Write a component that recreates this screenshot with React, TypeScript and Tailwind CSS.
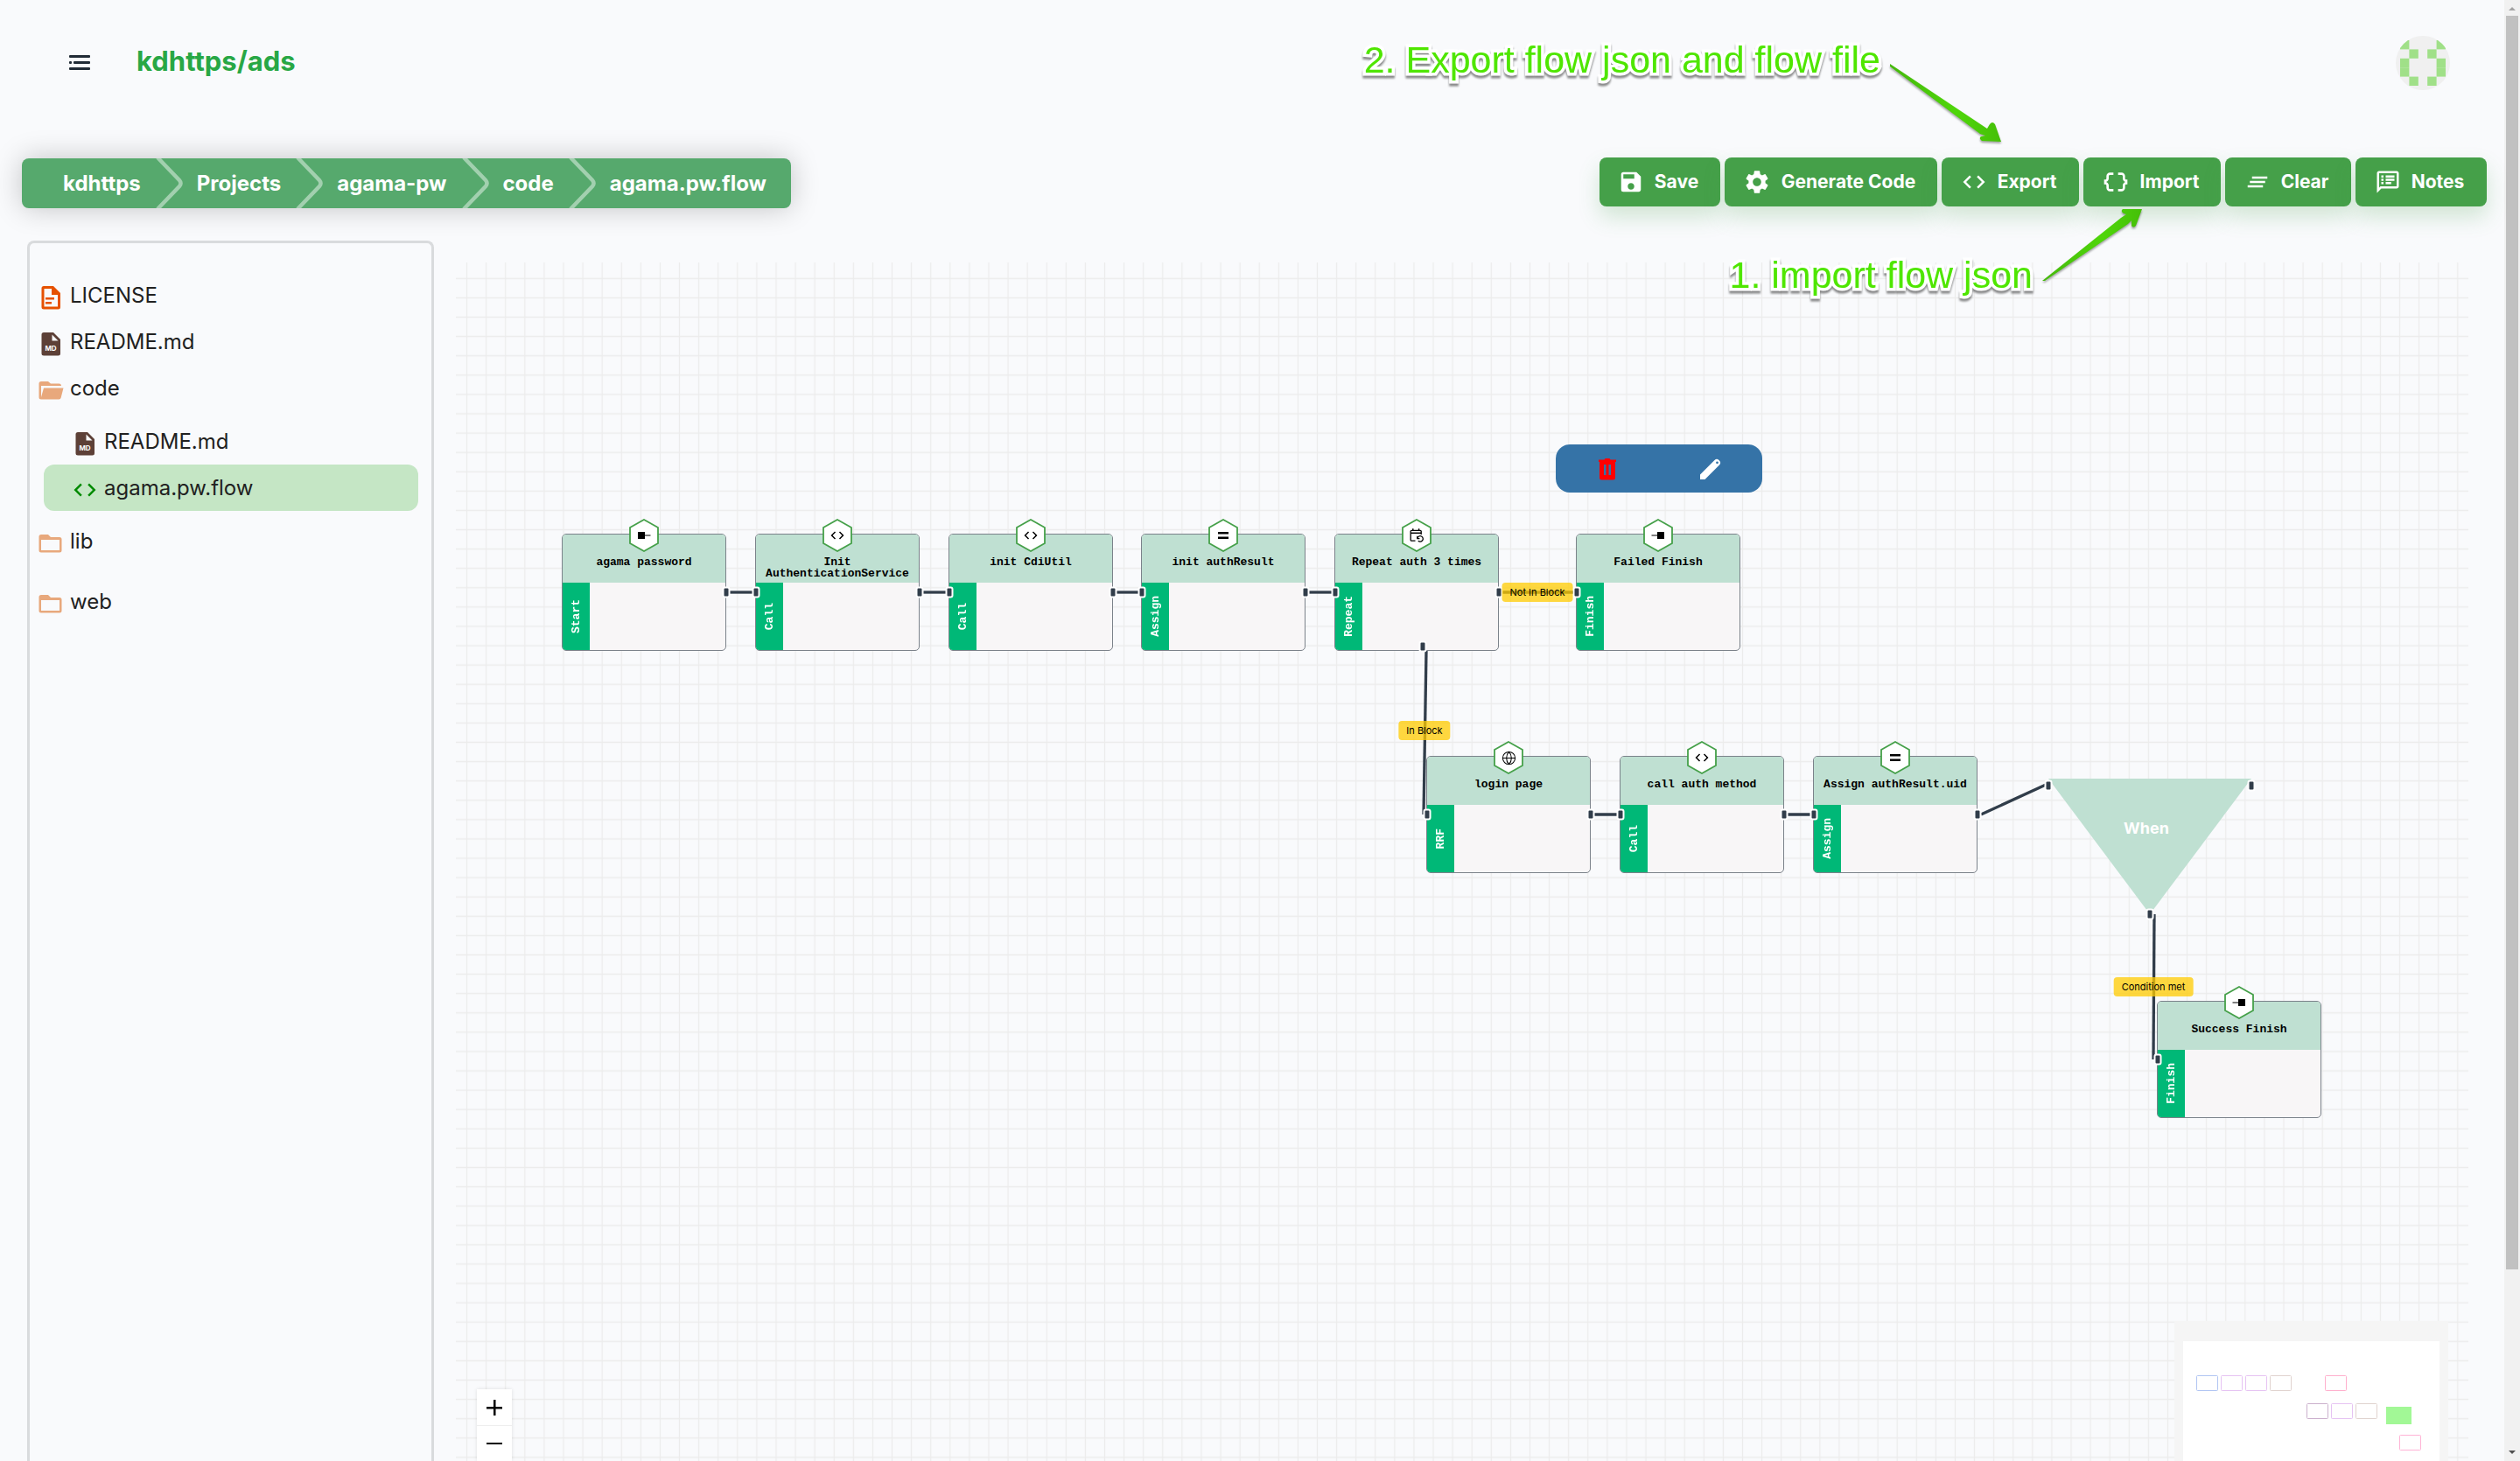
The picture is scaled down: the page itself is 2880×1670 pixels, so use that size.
import React from "react";
import { Globe } from "lucide-react";
import {
  MdSave,
  MdSettings,
  MdCode,
  MdDataObject,
  MdClearAll,
  MdOutlineSpeakerNotes,
} from "react-icons/md";

const INK = "#313d4a";
const SANS = "font-['Inter',sans-serif]";

/* ---------- icons ---------- */

function MenuIcon() {
  return (
    <svg width="24" height="18" viewBox="0 0 24 18" fill="#212b36">
      <rect x="0" y="0" width="24" height="3" rx="1" />
      <rect x="0" y="7" width="3" height="3" rx="1" />
      <rect x="5" y="7" width="19" height="3" rx="1" />
      <rect x="0" y="14" width="24" height="3" rx="1" />
    </svg>
  );
}

function Avatar() {
  const cells = [
    [0, 0], [4, 0], [1, 1], [3, 1], [0, 2], [4, 2], [0, 3], [4, 3], [1, 4], [3, 4],
  ];
  return (
    <svg width="64" height="62" viewBox="0 0 62 62" aria-hidden="true">
      <defs>
        <clipPath id="avatar-clip">
          <circle cx="31" cy="31" r="31" />
        </clipPath>
      </defs>
      <g clipPath="url(#avatar-clip)">
        <rect width="62" height="62" fill="#f0f0f0" />
        {cells.map(([c, r]) => (
          <rect key={`${c}-${r}`} x={5 + c * 10.4} y={5 + r * 10.4} width="10.4" height="10.4" fill="#a0e088" />
        ))}
      </g>
    </svg>
  );
}

function DocIcon() {
  return (
    <svg width="32" height="32" viewBox="0 0 32 32">
      <path
        d="M8 3h11l8 8v16a2.500 2.500 0 0 1-2.500 2.500H8A2.500 2.500 0 0 1 5.500 27V5.500A2.500 2.500 0 0 1 8 3zm.500 3v20.500h15.500V13h-7V6zM10 16h10v2.500H10zm0 5h7v2.500h-7z"
        fill="#e65100"
      />
    </svg>
  );
}

function MdFileIcon() {
  return (
    <svg width="32" height="32" viewBox="0 0 32 32">
      <path
        d="M8 3h11l8 8v16a2.500 2.500 0 0 1-2.500 2.500H8A2.500 2.500 0 0 1 5.500 27V5.500A2.500 2.500 0 0 1 8 3z"
        fill="#5d4037"
      />
      <path d="M17.500 5.500v7h7z" fill="#f9fafc" />
      <text x="16" y="24" fontSize="8" fontWeight="700" fontFamily="Inter, sans-serif" textAnchor="middle" fill="#fff">
        MD
      </text>
    </svg>
  );
}

function FolderIcon() {
  return (
    <svg width="32" height="32" viewBox="0 0 32 32">
      <path
        d="M5 6h8l3 3h10a2.500 2.500 0 0 1 2.500 2.500V24a2.500 2.500 0 0 1-2.500 2.500H5A2.500 2.500 0 0 1 2.500 24V8.500A2.500 2.500 0 0 1 5 6zm0 6v12h21V12z"
        fill="#e8a87c"
      />
    </svg>
  );
}

function FolderOpenIcon() {
  return (
    <svg width="32" height="32" viewBox="0 0 32 32">
      <path
        d="M5 6h8l3 2.500h9.500a2.500 2.500 0 0 1 2.500 2.500H5v13l3-10.500h22.500l-2.800 11a2.500 2.500 0 0 1-2.400 2H5A2.500 2.500 0 0 1 2.500 24V8.500A2.500 2.500 0 0 1 5 6z"
        fill="#e8a87c"
      />
    </svg>
  );
}

function TrashIcon() {
  return (
    <svg width="26" height="26" viewBox="0 0 26 26">
      <path
        d="M3 2.500h6.500L10.500 1h5l1 1.500H23V5h-1v18a2.500 2.500 0 0 1-2.500 2.500h-13A2.500 2.500 0 0 1 4 23V5H3zM9 8v12h2.500V8zm5.500 0v12H17V8z"
        fill="#ff0000"
        fillRule="evenodd"
      />
    </svg>
  );
}

function PencilIcon() {
  return (
    <svg width="26" height="26" viewBox="0 0 26 26">
      <path
        d="M1 19.500 17.500 3a3.600 3.600 0 0 1 5 0l.5.500a3.600 3.600 0 0 1 0 5L6.500 25H1zM20.500 4.400a1.400 1.400 0 1 0 0 2.800 1.400 1.400 0 0 0 0-2.800z"
        fill="#fff"
        fillRule="evenodd"
      />
    </svg>
  );
}

function StartGlyph() {
  return (
    <svg width="16" height="16" viewBox="0 0 16 16">
      <path d="M1 4h8v3.500h6.500v1H9V12H1z" />
    </svg>
  );
}

function FinishGlyph() {
  return (
    <svg width="16" height="16" viewBox="0 0 16 16">
      <path d="M15 4H7v3.500H.5v1H7V12h8z" />
    </svg>
  );
}

function EqualsGlyph() {
  return (
    <svg width="16" height="16" viewBox="0 0 16 16">
      <path d="M2 4h12v2.500H2zM2 9.500h12V12H2z" />
    </svg>
  );
}

function RepeatGlyph() {
  return (
    <svg width="18" height="18" viewBox="0 0 18 18" fill="none" stroke="#000" strokeWidth="1.300">
      <path d="M7.500 15.200H3.200a1 1 0 0 1-1-1V4.300a1 1 0 0 1 1-1h10a1 1 0 0 1 1 1V8" />
      <path d="M2.200 6.300h12" strokeWidth="1.500" />
      <path d="M4.800 1.300v2.500M11.600 1.300v2.500" strokeWidth="1.500" />
      <path d="M10 12.200a3.200 3.200 0 1 1 .8 2.900" />
      <path d="M9.700 9.800v2.800h2.700" strokeWidth="1.100" />
    </svg>
  );
}

/* ---------- top area ---------- */

function Chevron() {
  return (
    <svg width="32" height="57" viewBox="0 0 32 57" className="shrink-0" fill="none">
      <path d="M3 -1 L28 25 Q31 28.500 28 32 L3 58" stroke="#fff" strokeOpacity="0.45" strokeWidth="4.500" />
    </svg>
  );
}

function Breadcrumbs() {
  const crumbs = ["kdhttps", "Projects", "agama-pw", "code", "agama.pw.flow"];
  return (
    <nav
      aria-label="Breadcrumb"
      className="mt-px flex h-[57px] items-center overflow-visible rounded-lg bg-[#56a96d] pr-7 pl-[47px] text-2xl font-bold text-white shadow-[0_0_32px_rgba(0,0,0,0.22)]"
    >
      {crumbs.map((c, i) => (
        <React.Fragment key={c}>
          {i > 0 && (
            <span className="mx-4">
              <Chevron />
            </span>
          )}
          <a href="#" className="whitespace-nowrap">{c}</a>
        </React.Fragment>
      ))}
    </nav>
  );
}

function Actions() {
  const items = [
    { label: "Save", icon: <MdSave size={30} />, w: "w-[138px]" },
    { label: "Generate Code", icon: <MdSettings size={32} />, w: "w-[243px]" },
    { label: "Export", icon: <MdCode size={30} />, w: "w-[157px]" },
    { label: "Import", icon: <MdDataObject size={32} />, w: "w-[157px]" },
    { label: "Clear", icon: <MdClearAll size={30} />, w: "w-[144px]" },
    { label: "Notes", icon: <MdOutlineSpeakerNotes size={30} />, w: "w-[150px]" },
  ];
  return (
    <div className="flex gap-[5px]">
      {items.map((it) => (
        <button
          key={it.label}
          type="button"
          className={`${it.w} flex h-14 items-center justify-center gap-3 rounded-lg bg-[#45a049] pr-1 text-[21px] font-bold whitespace-nowrap text-white shadow-[0_12px_24px_rgba(69,160,73,0.22)]`}
        >
          {it.icon}
          {it.label}
        </button>
      ))}
    </div>
  );
}

/* ---------- file tree ---------- */

function TreeRow({ icon, label, nested, selected }: { icon: React.ReactNode; label: string; nested?: boolean; selected?: boolean }) {
  return (
    <button
      type="button"
      className={`flex h-[53px] items-center gap-1.5 text-left text-2xl text-[#212121] ${
        nested ? "mr-[15px] ml-4 pl-[31px]" : "pl-2"
      } ${selected ? "rounded-xl bg-[#c5e6c5]" : ""}`}
    >
      <span className="flex w-8 justify-center pt-1">{icon}</span>
      <span>{label}</span>
    </button>
  );
}

function Sidebar() {
  return (
    <aside className="mt-[37px] ml-[31px] flex w-[465px] shrink-0 flex-col rounded-t-lg border-[3px] border-b-0 border-[#d9dbdd] pt-[33px]">
      <TreeRow icon={<DocIcon />} label="LICENSE" />
      <TreeRow icon={<MdFileIcon />} label="README.md" />
      <TreeRow icon={<FolderOpenIcon />} label="code" />
      <div className="my-2 flex flex-col">
        <TreeRow nested icon={<MdFileIcon />} label="README.md" />
        <TreeRow nested selected icon={<MdCode size={30} color="#008a00" />} label="agama.pw.flow" />
      </div>
      <div className="flex flex-col gap-4">
        <TreeRow icon={<FolderIcon />} label="lib" />
        <TreeRow icon={<FolderIcon />} label="web" />
      </div>
    </aside>
  );
}

/* ---------- flow canvas ---------- */

type NodeData = { x: number; y: number; title: string; kind: string; icon: React.ReactNode; hasIn?: boolean; hasOut?: boolean };

const NODES: NodeData[] = [
  { x: 121, y: 310, title: "agama password", kind: "Start", icon: <StartGlyph />, hasOut: true },
  { x: 342, y: 310, title: "Init AuthenticationService", kind: "Call", icon: <MdCode size={18} />, hasIn: true, hasOut: true },
  { x: 563, y: 310, title: "init CdiUtil", kind: "Call", icon: <MdCode size={18} />, hasIn: true, hasOut: true },
  { x: 783, y: 310, title: "init authResult", kind: "Assign", icon: <EqualsGlyph />, hasIn: true, hasOut: true },
  { x: 1004, y: 310, title: "Repeat auth 3 times", kind: "Repeat", icon: <RepeatGlyph />, hasIn: true, hasOut: true },
  { x: 1280, y: 310, title: "Failed Finish", kind: "Finish", icon: <FinishGlyph />, hasIn: true },
  { x: 1109, y: 564, title: "login page", kind: "RRF", icon: <Globe size={17} strokeWidth={1.5} />, hasIn: true, hasOut: true },
  { x: 1330, y: 564, title: "call auth method", kind: "Call", icon: <MdCode size={18} />, hasIn: true, hasOut: true },
  { x: 1551, y: 564, title: "Assign authResult.uid", kind: "Assign", icon: <EqualsGlyph />, hasIn: true, hasOut: true },
  { x: 1944, y: 844, title: "Success Finish", kind: "Finish", icon: <FinishGlyph />, hasIn: true },
];

function Handle({ x, y }: { x: number; y: number }) {
  return (
    <span
      className="absolute h-[13px] w-[9px] -translate-x-1/2 -translate-y-1/2 rounded-[3px] border-2 border-white bg-[#313d4a]"
      style={{ left: x, top: y }}
    />
  );
}

function FlowNode({ x, y, title, kind, icon }: NodeData) {
  return (
    <div className="absolute h-[134px] w-[188px] font-['Liberation_Mono',monospace]" style={{ left: x, top: y }}>
      <div className="flex h-full flex-col overflow-hidden rounded-[5px] border border-[#7b828a] bg-[#f8f6f7]">
        <div className="flex h-[55px] shrink-0 items-start justify-center bg-[#bfe0d2] px-2 pt-[25px] text-center text-[13px] leading-[13px] font-bold text-black">
          {title}
        </div>
        <div className="flex w-[31px] flex-1 items-center justify-center bg-[#00b877] text-[13px] leading-4 font-bold text-white">
          <span className="rotate-180 [writing-mode:vertical-rl]">{kind}</span>
        </div>
      </div>
      <div className="absolute -top-[17px] left-1/2 flex h-[38px] w-[34px] -translate-x-1/2 items-center justify-center text-black">
        <svg width="34" height="38" viewBox="0 0 34 38" className="absolute inset-0">
          <path d="M17 1 33 10v18L17 37 1 28V10z" fill="#fff" stroke="#45a049" strokeWidth="1.800" />
        </svg>
        <span className="relative">{icon}</span>
      </div>
    </div>
  );
}

function EdgeLabel({ x, y, children }: { x: number; y: number; children: string }) {
  return (
    <span
      className="absolute flex h-[22px] -translate-x-1/2 items-center rounded-[4px] bg-[#ffcc00]/75 px-[9px] text-[11px] whitespace-nowrap text-black"
      style={{ left: x, top: y }}
    >
      {children}
    </span>
  );
}

function MiniMap() {
  const rects = [
    { x: 15, y: 39, c: "#b1c5f3" },
    { x: 43, y: 39, c: "#e6c3f3" },
    { x: 71, y: 39, c: "#e6c3f3" },
    { x: 99, y: 39, c: "#e0d3cf" },
    { x: 162, y: 39, c: "#ffb0cd" },
    { x: 141, y: 71, c: "#cbb0cd" },
    { x: 169, y: 71, c: "#e6c3f3" },
    { x: 197, y: 71, c: "#e0d3cf" },
    { x: 247, y: 107, c: "#ffb3d6" },
  ];
  return (
    <div className="absolute right-[23px] bottom-0 h-[160px] w-[313px] bg-[#f5f5f5] px-[10px] pt-[23px]">
      <svg width="293" height="137" viewBox="0 0 293 137" className="bg-white">
        {rects.map((r, i) => (
          <rect key={i} x={r.x + 0.5} y={r.y + 0.5} width="24" height="17" rx="1" fill="none" stroke={r.c} />
        ))}
        <rect x="232" y="75" width="29" height="20" fill="#a2f896" />
      </svg>
    </div>
  );
}

function Canvas() {
  const edges: [number, number, number, number][] = [
    [310, 377, 342, 377],
    [531, 377, 563, 377],
    [752, 377, 783, 377],
    [972, 377, 1004, 377],
    [1193, 377, 1280, 377],
    [1297, 631, 1330, 631],
    [1518, 631, 1551, 631],
    [1743, 631, 1817, 597],
    [1109, 444, 1106, 631],
    [1941, 745, 1940, 911],
  ];
  return (
    <section className="relative mt-[62px] mr-[41px] ml-[25px] flex-1 overflow-hidden" aria-label="Flow canvas">
      <svg className="absolute inset-0 h-full w-full">
        <defs>
          <pattern id="grid" x="1.500" y="7.300" width="22.090" height="22.090" patternUnits="userSpaceOnUse">
            <path d="M11.045 0V22.090M0 11.045H22.090" stroke="#ececec" strokeWidth="1.300" />
          </pattern>
        </defs>
        <rect width="100%" height="100%" fill="url(#grid)" />
        <path d="M1820 590H2052L1936 745z" fill="#bfe0d2" />
      </svg>

      {NODES.map((n) => (
        <FlowNode key={n.title} {...n} />
      ))}

      <svg className="absolute inset-0 h-full w-full">
        {edges.map(([x1, y1, x2, y2], i) => (
          <line key={i} x1={x1} y1={y1} x2={x2} y2={y2} stroke={INK} strokeWidth="3.300" />
        ))}
      </svg>

      <span className="absolute top-[633px] left-[1932px] -translate-x-1/2 text-lg leading-7 font-bold text-white">When</span>

      {NODES.map((n) => (
        <React.Fragment key={n.title}>
          {n.hasIn && <Handle x={n.x + 1} y={n.y + 67} />}
          {n.hasOut && <Handle x={n.x + 188} y={n.y + 67} />}
        </React.Fragment>
      ))}
      <Handle x={1105} y={439} />
      <Handle x={1820} y={598} />
      <Handle x={2052} y={598} />
      <Handle x={1936} y={745} />

      <EdgeLabel x={1236} y={366}>Not In Block</EdgeLabel>
      <EdgeLabel x={1107} y={524}>In Block</EdgeLabel>
      <EdgeLabel x={1940} y={817}>Condition met</EdgeLabel>

      <div className="absolute top-[208px] left-[1257px] flex h-[55px] w-[236px] items-center justify-around rounded-2xl bg-[#3573a7]">
        <button type="button" aria-label="Delete node"><TrashIcon /></button>
        <button type="button" aria-label="Edit node"><PencilIcon /></button>
      </div>

      <div className="absolute bottom-0 left-6 flex h-[82px] w-10 flex-col overflow-hidden bg-white shadow-[0_0_4px_rgba(0,0,0,0.12)]">
        <button type="button" aria-label="Zoom in" className="flex h-[42px] shrink-0 items-center justify-center border-b border-[#eee]">
          <svg width="18" height="20" viewBox="0 0 18 20"><path d="M8 1h2.500v8H18v2.500h-7.500V19H8v-7.500H0V9h8z" /></svg>
        </button>
        <button type="button" aria-label="Zoom out" className="flex h-10 shrink-0 items-center justify-center">
          <svg width="18" height="20" viewBox="0 0 18 20"><path d="M0 9h18v2H0z" /></svg>
        </button>
      </div>

      <MiniMap />
    </section>
  );
}

/* ---------- callouts ---------- */

const CALLOUT =
  "absolute whitespace-nowrap font-['Liberation_Sans',sans-serif] text-[43px] leading-[48px] text-[#4fe600] [paint-order:stroke_fill] [-webkit-text-stroke:7px_white] [filter:drop-shadow(0_3px_1px_rgba(0,0,0,0.45))]";

function Callouts() {
  return (
    <div className="pointer-events-none absolute inset-0">
      <span className={`${CALLOUT} top-11 right-[713px]`}>2. Export flow json and flow file</span>
      <span className={`${CALLOUT} top-[290px] right-[539px]`}>1. import flow json</span>
      <svg width="320" height="270" viewBox="2150 64 320 270" className="absolute top-16 right-[392px] [filter:drop-shadow(0_2px_1px_rgba(0,0,0,0.35))]">
        <defs>
          <linearGradient id="arrow" x1="0" y1="0" x2="1" y2="0">
            <stop offset="0" stopColor="#45b80c" />
            <stop offset="0.6" stopColor="#4fd60a" />
            <stop offset="1" stopColor="#45bf08" />
          </linearGradient>
        </defs>
        <path
          d="M2160 73 L2271 147 L2274 142 Q2277 138 2280 142 L2287 162 L2265 161 Q2261 158 2264 156 L2269 155 L2263 153 L2160 76z"
          fill="url(#arrow)"
        />
        <path
          d="M2334 321 L2424 249 L2430 245 L2427 244 Q2423 241 2426 239 L2448 239 L2441 258 Q2438 261 2436 258 L2436 252 L2432 256 L2337 321z"
          fill="url(#arrow)"
        />
      </svg>
    </div>
  );
}

function Scrollbar() {
  return (
    <div className="flex w-[18px] shrink-0 flex-col items-center bg-[#f1f1f1]" aria-hidden="true">
      <svg width="18" height="18" viewBox="0 0 18 18" className="shrink-0"><path d="M5 12h8L9 8z" fill="#a3a3a3" /></svg>
      <div className="w-3.5 grow-[1433] bg-[#c1c1c1]" />
      <div className="grow-[201]" />
      <svg width="18" height="18" viewBox="0 0 18 18" className="shrink-0"><path d="M5 6h8L9 10z" fill="#505050" /></svg>
    </div>
  );
}

export default function App() {
  return (
    <div className={`flex h-screen overflow-hidden bg-[#f9fafc] ${SANS}`}>
      <div className="relative flex min-w-0 flex-1 flex-col">
        <header className="flex h-36 shrink-0 items-center pr-[61px] pl-[79px]">
          <button type="button" aria-label="Menu"><MenuIcon /></button>
          <h1 className="ml-[53px] pb-1 text-[31px] leading-10 font-bold text-[#28a745]">kdhttps/ads</h1>
          <button type="button" aria-label="Account" className="ml-auto"><Avatar /></button>
        </header>
        <div className="mt-9 flex shrink-0 items-start justify-between pr-5 pl-[25px]">
          <Breadcrumbs />
          <Actions />
        </div>
        <main className="flex min-h-0 flex-1">
          <Sidebar />
          <Canvas />
        </main>
        <Callouts />
      </div>
      <Scrollbar />
    </div>
  );
}
